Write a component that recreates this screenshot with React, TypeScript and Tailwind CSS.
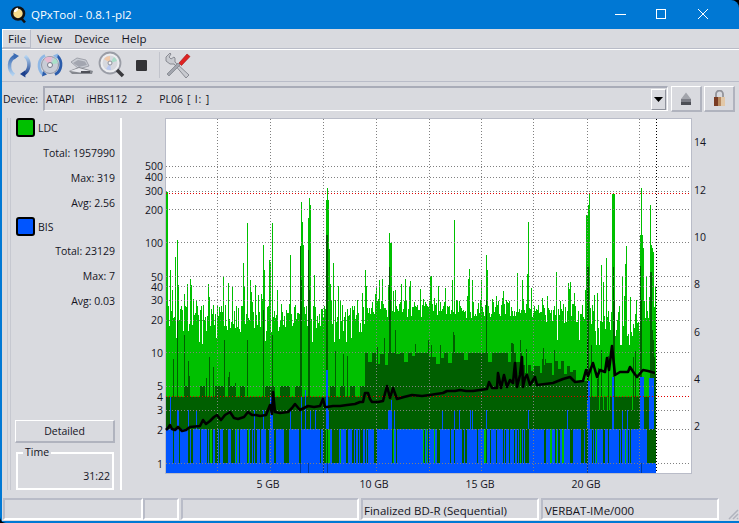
import React from 'react'

const FONT = "[font-family:'Open_Sans',sans-serif]"

// seeded so the graph looks the same on every run
function makeRand(seed: number) {
    let s = seed
    return () => {
        s |= 0
        s = (s + 0x6d2b79f5) | 0
        let t = Math.imul(s ^ (s >>> 15), 1 | s)
        t = (t + Math.imul(t ^ (t >>> 7), 61 | t)) ^ t
        return ((t ^ (t >>> 14)) >>> 0) / 4294967296
    }
}

const SPIKES: [number, number][] = [
    [166, 192], [167, 192], [170, 270], [172, 290], [175, 257], [177, 240], [178, 285], [190, 279], [191, 285], [208, 284], [223, 277], [228, 283],
    [232, 287], [243, 263], [244, 286], [247, 223], [250, 280], [255, 285], [258, 295], [263, 245], [264, 270], [269, 260], [270, 262], [272, 223],
    [277, 290], [290, 255], [300, 267], [301, 202], [302, 222], [303, 245], [308, 218], [309, 198], [310, 205], [314, 275], [326, 200], [327, 188],
    [328, 200], [329, 249], [330, 284], [333, 263], [365, 270], [379, 280], [382, 279], [389, 233], [390, 243], [391, 243], [401, 284], [430, 277],
    [454, 220], [469, 269], [481, 280], [486, 255], [487, 270], [527, 274], [528, 222], [556, 272], [570, 282], [586, 215], [587, 215], [588, 205],
    [589, 194], [601, 265], [603, 282], [606, 258], [612, 194], [613, 194], [614, 194], [622, 277], [625, 264], [626, 246], [640, 235], [641, 188],
    [642, 235], [643, 248], [646, 277], [650, 205], [651, 245], [652, 248], [653, 252], [655, 287],
]

const DARK_SPIKES: [number, number][] = [
    [177, 320], [184, 335], [224, 340], [247, 340], [263, 310], [272, 335], [300, 246], [301, 280], [308, 250], [309, 290], [326, 235], [327, 235],
    [389, 267], [390, 300], [395, 330], [428, 340], [454, 335], [486, 300], [520, 340], [587, 267], [588, 267], [613, 267], [614, 300], [640, 266],
    [641, 300], [650, 272], [651, 272], [652, 330], [653, 340],
]

const BLUE_PEAKS: [number, number][] = [
    [170, 397], [177, 410], [178, 410], [188, 410], [196, 410], [254, 410], [263, 410], [270, 397], [271, 397], [272, 397], [290, 410], [301, 397],
    [305, 390], [310, 410], [315, 410], [326, 370], [327, 370], [328, 410], [388, 410], [389, 410], [390, 410], [391, 400], [394, 410], [442, 410],
    [454, 410], [459, 410], [470, 410], [472, 410], [486, 410], [528, 410], [567, 410], [587, 381], [588, 381], [589, 381], [612, 377], [613, 377],
    [622, 410], [627, 410], [640, 377], [641, 377], [642, 377], [643, 377], [649, 378], [650, 378], [651, 378], [652, 378], [653, 378],
]

const LINE =
    '166,430 168,428 170,425 172,429 175,430 178,427 182,431 186,430 190,427 200,426 203,420 206,424 210,421 214,417 217,415 221,420 225,415 230,412 234,418 238,419 244,417 248,412 252,415 256,415 260,416 266,415 270,405 272,414 273,392 275,412 280,413 288,412 292,408 295,404 300,410 304,408 308,406 314,407 320,406 323,399 325,407 327,407 333,406 340,406 347,405 355,404 360,402 363,402 365,393 368,393 370,399 372,402 378,402 383,401 387,386 390,398 393,388 397,399 404,397 412,395 422,396 430,395 436,394 443,393 447,391 450,391 455,391 460,390 466,391 473,391 480,390 487,389 489,382 492,388 497,388 498,373 501,388 504,375 507,387 510,380 513,383 515,363 517,387 520,375 522,357 523,387 525,378 527,375 530,385 535,377 537,385 545,384 553,383 558,381 563,379 570,377 575,382 583,381 586,370 588,376 593,363 597,377 600,370 605,372 607,358 609,370 612,346 615,375 620,372 628,372 630,367 634,373 637,377 643,370 648,371 655,373'

const buildChart = () => {
    const rand = makeRand(7341)
    const spike = new Map(SPIKES)
    const darkSpike = new Map(DARK_SPIKES)
    const bluePeak = new Map(BLUE_PEAKS)
    let bright = ''
    let dark = ''
    let blue = ''
    let bandBright = ''
    let band = 0
    let block = 353
    let low = 397
    for (let x = 166; x <= 655; x++) {
        const px = x + 0.5
        const lift = rand() < 0.28 ? rand() * 28 : 0
        let top: number
        if (x < 365) top = rand() < 0.06 ? 345 - rand() * 8 : 305 + rand() * 28 - lift
        else if (x < 545) top = 300 + rand() * 18 - lift
        else if (x < 590) top = rand() < 0.06 ? 340 : 303 + rand() * 20 - lift
        else top = rand() < 0.1 ? 345 : 305 + rand() * 32 - lift
        if (spike.has(x)) top = spike.get(x) as number

        let dTop: number
        if (x < 365) {
            if (x % 5 === 0) low = rand() < 0.35 ? 386 : 397
            dTop = low
            if (rand() < 0.06) dTop = 345 + rand() * 40
        } else if (x < 522) {
            if (x % 4 === 0) block = rand() < 0.65 ? 353 : 353 + rand() * 12
            dTop = rand() < 0.06 ? 330 + rand() * 20 : block
        } else if (x < 587) {
            if (x % 3 === 0) block = 360 + rand() * 16
            dTop = x > 575 ? 381 : block
            if (rand() < 0.08) dTop = 340 + rand() * 20
        } else {
            dTop = 397
            const r = rand()
            if (r < 0.14) dTop = 345 + rand() * 40
            else if (r < 0.22) dTop = 410
        }
        if (darkSpike.has(x)) dTop = darkSpike.get(x) as number

        bright += `M${px} ${top}V473`
        dark += `M${px} ${dTop}V473`

        // band between 2 and 1 on the log axis, short runs of blue with green lines between
        if (rand() > 0.25) {
            const r = rand()
            band = r < 0.66 ? 0 : r < 0.72 ? 1 : 2
        }
        if (band === 0) blue += `M${px} 429V463`
        if (band === 1) bandBright += `M${px} 429V463`
        const peak = bluePeak.get(x)
        if (peak) blue += `M${px} ${peak}V429`
    }
    return { bright, dark, blue, bandBright }
}

const chart = buildChart()

const HLINES = [166, 177, 191, 209, 242, 276, 286, 300, 320, 352, 386, 410, 429, 463]
const VLINES = [217, 270, 323, 376, 429, 481, 533, 587, 639]
const LEFT_LABELS: [string, number][] = [
    ['500', 166], ['400', 177], ['300', 191], ['200', 210], ['100', 243], ['50', 277], ['40', 287], ['30', 300], ['20', 320], ['10', 353], ['5', 386], ['4', 397], ['3', 410], ['2', 430], ['1', 464],
]
const RIGHT_LABELS: [string, number][] = [['14', 142], ['12', 190], ['10', 237], ['8', 284], ['6', 332], ['4', 379], ['2', 426]]
const BOTTOM_LABELS: [string, number][] = [['5 GB', 268], ['10 GB', 374], ['15 GB', 480], ['20 GB', 586]]

const Chart = () => (
    <svg viewBox="122 112 617 386" className="block w-[617px] h-[386px] shrink-0">
        <rect x="165" y="118" width="527" height="356" fill="#b9bcc8" />
        <rect x="166" y="119" width="525" height="354" fill="#ffffff" />
        <g shapeRendering="crispEdges" fill="none" strokeWidth="1">
            <path d={chart.bright} stroke="#00c000" />
            <path d={chart.dark} stroke="#005f00" />
            <path d={chart.bandBright} stroke="#00c000" />
            <path d={chart.blue} stroke="#0055ff" />
            <rect x="166" y="463" width="490" height="10" fill="#0055ff" stroke="none" />
            <path d="M300.5 463V473M308.5 463V473M323.5 463V473M327.5 463V473M587.5 463V473M641.5 463V473" stroke="#003a9c" />
            <path d="M587.5 340V400" stroke="#002800" />
            {HLINES.map((y) => (
                <path key={y} d={`M166 ${y + 0.5}H691`} stroke="#808080" strokeDasharray="1 2" />
            ))}
            {VLINES.map((x) => (
                <path key={x} d={`M${x + 0.5} 119V473`} stroke="#808080" strokeDasharray="1 2" />
            ))}
            <path d="M166 193.5H691M166 396.5H691" stroke="#e00000" strokeDasharray="1 2" />
            <path d="M656.5 119V473" stroke="#000000" strokeDasharray="1 2" />
        </g>
        <polyline points={LINE} fill="none" stroke="#000000" strokeWidth="2.6" strokeLinejoin="round" />
        <g className={`${FONT} text-[10.5px]`} fill="#14141e">
            {LEFT_LABELS.map(([t, y]) => (
                <text key={t} x="163" y={y + 4} textAnchor="end">{t}</text>
            ))}
            {RIGHT_LABELS.map(([t, y]) => (
                <text key={t} x="694" y={y + 4}>{t}</text>
            ))}
            {BOTTOM_LABELS.map(([t, x]) => (
                <text key={t} x={x} y="488" textAnchor="middle">{t}</text>
            ))}
        </g>
    </svg>
)

const AppIcon = () => (
    <svg width="18" height="20" viewBox="0 0 18 20" className="ml-[10px] mr-[3px]">
        <circle cx="8" cy="8.500" r="6" fill="#f7dc8c" stroke="#111111" strokeWidth="2.600" />
        <path d="M5 7a3 3 0 0 1 3-3" stroke="#ffffff" strokeWidth="2.400" fill="none" />
        <path d="M11 13l4 4.500" stroke="#111111" strokeWidth="2.600" />
    </svg>
)

const RefreshIcon = () => (
    <svg width="26" height="26" viewBox="0 0 26 26">
        <defs>
            <linearGradient id="arcL" x1="0" y1="0" x2="0" y2="1">
                <stop offset="0" stopColor="#3c6cb4" />
                <stop offset="1" stopColor="#b4d4f2" />
            </linearGradient>
            <linearGradient id="arcR" x1="0" y1="0" x2="0" y2="1">
                <stop offset="0" stopColor="#b4d4f2" />
                <stop offset="1" stopColor="#1c3f8c" />
            </linearGradient>
        </defs>
        <path d="M10 4C2 7 1.500 18 8 23" stroke="url(#arcL)" strokeWidth="3.500" fill="none" />
        <path d="M7.500 1L13 4l-5 3.500z" fill="#3c6cb4" />
        <path d="M17 22.500C24 19 25 9 19 4" stroke="url(#arcR)" strokeWidth="3.500" fill="none" />
        <path d="M19.500 25.500L14 22l5-3.500z" fill="#1c3f8c" />
    </svg>
)

const DiscIcon = () => (
    <svg width="26" height="26" viewBox="0 0 26 26">
        <circle cx="13" cy="13" r="8.500" fill="#c8ccd6" stroke="#8d93a3" />
        <path d="M13 13L7 7a8.500 8.500 0 0 1 8-2z" fill="#e9b8d0" />
        <path d="M13 13L21 11a8.500 8.500 0 0 0-3-5z" fill="#a9e0c8" />
        <circle cx="13" cy="13" r="2.500" fill="#f2f3f6" stroke="#777c8a" />
        <path d="M8 3.500C1 7 0 17 6 22.500" stroke="#8db7e6" strokeWidth="2.800" fill="none" />
        <path d="M18 22.500C25 19 26 9 20 3.500" stroke="#2a5cab" strokeWidth="2.800" fill="none" />
        <path d="M21 1.500L20 7l-4-3.500z" fill="#8db7e6" />
        <path d="M5 24.500L6 19l4 3.500z" fill="#2a5cab" />
    </svg>
)

const DriveIcon = () => (
    <svg width="26" height="26" viewBox="0 0 26 26">
        <path d="M3 10L9 6l9 2 3 6-10 3z" fill="#c9ccd3" stroke="#8a8d96" strokeWidth="0.700" />
        <path d="M5 11l5-3 7 1.500 2 3.500-8 2z" fill="#a3a6b0" />
        <path d="M1 19l10-4 14 4-1 3H4z" fill="#85888f" />
        <path d="M2 19l9-3 11 3-10 1.500z" fill="#e6e7ec" />
        <rect x="13" y="19" width="9" height="2" fill="#4e5058" />
    </svg>
)

const ScanIcon = () => (
    <svg width="28" height="28" viewBox="0 0 28 28">
        <circle cx="12" cy="12" r="10.500" fill="#ecedf0" stroke="#9a9da6" strokeWidth="1.800" />
        <circle cx="12" cy="12" r="7.500" fill="#d6d8de" />
        <path d="M12 12L6 8a7.500 7.500 0 0 1 6-3z" fill="#f0c8a8" />
        <path d="M12 12L19 10a7.500 7.500 0 0 0-3-4z" fill="#a8dcc8" />
        <path d="M12 12L8 18a7.500 7.500 0 0 0 5 1z" fill="#b8c8f0" />
        <circle cx="12" cy="12" r="2" fill="#f6f6f8" stroke="#8f929b" />
        <path d="M19 19l6 6" stroke="#3a3a3e" strokeWidth="3.500" />
    </svg>
)

const ToolsIcon = () => (
    <svg width="28" height="28" viewBox="0 0 28 28">
        <path d="M2 6L6 2l1 1-2 3 2 2 3-2 1 1 0 4 14 13-3 3L10 13H6L2 10z" fill="#c8cad0" stroke="#767982" strokeWidth="0.800" />
        <path d="M3 23L14 12l2 2L5 25z" fill="#a2a5ae" stroke="#6f727b" strokeWidth="0.600" />
        <path d="M15 12l8-9 3 2.500-8.500 9z" fill="#e02222" stroke="#9c1212" strokeWidth="0.600" />
    </svg>
)

const EjectIcon = () => (
    <svg width="12" height="13" viewBox="0 0 12 13">
        <path d="M6 0.500L11 7H1z" fill="#a3a5ac" />
        <rect x="1" y="7" width="10" height="3" fill="#7c7e86" />
        <rect x="1" y="10" width="10" height="3" fill="#4d4f56" />
    </svg>
)

const LockIcon = () => (
    <svg width="13" height="16" viewBox="0 0 13 16">
        <path d="M3 7V4a3.500 3.500 0 0 1 7 0v3" stroke="#93949b" strokeWidth="1.800" fill="none" />
        <rect x="1" y="7" width="11" height="9" fill="#b88a60" />
        <rect x="1" y="7" width="4" height="9" fill="#7a3c24" />
        <rect x="8" y="7" width="4" height="9" fill="#e2c8a8" />
    </svg>
)

const Stat = ({ label, value }: { label: string; value: string }) => (
    <p className="h-[24.6px] flex items-center justify-end whitespace-pre">
        {label}: {value}
    </p>
)

const Legend = ({ color, label }: { color: string; label: string }) => (
    <div className="flex items-center gap-[3px] h-[19px]">
        <span className={`block w-[19px] h-[19px] rounded-[3px] border-2 border-black ${color}`} />
        <span className="pt-[2px]">{label}</span>
    </div>
)

const StatusCell = ({ className, children }: { className: string; children?: React.ReactNode }) => (
    <div className={`h-full border-t-2 border-l-2 border-[#b9bcc8] border-b-2 border-b-white border-r-2 border-r-white flex items-center pl-[1px] pt-[3px] ${className}`}>
        {children}
    </div>
)

const App = () => {
    return (
        <div className={`w-[739px] h-[523px] bg-black overflow-hidden text-[10.5px] text-[#14141e] ${FONT}`}>
            <div className="w-full h-full bg-[#0078d4] rounded-tr-[8px] rounded-bl-[6px] pl-[2px] pb-[2px] flex flex-col">
                <div className="h-[29px] -ml-[2px] flex items-center text-white text-[11.5px] shrink-0">
                    <AppIcon />
                    <span>QPxTool - 0.8.1-pl2</span>
                    <div className="ml-auto flex items-center">
                        <svg width="108" height="29" viewBox="0 0 108 29" className="mr-[16px]">
                            <path d="M0 14.500H11" stroke="#fff" />
                            <rect x="41.500" y="9.500" width="9" height="9" stroke="#fff" fill="none" />
                            <path d="M83 9l10 10M93 9L83 19" stroke="#fff" />
                        </svg>
                    </div>
                </div>
                <div className="flex-1 bg-[#d9dadf] flex flex-col min-h-0">
                    <div className="h-[19px] flex items-center text-[11.5px] shrink-0">
                        <span className="h-full w-[29px] flex items-center pl-[5px] border-t border-l border-white border-r border-r-[#b9bcc8] border-b border-b-[#b9bcc8]">File</span>
                        <span className="ml-[6px]">View</span>
                        <span className="ml-[12px]">Device</span>
                        <span className="ml-[12px]">Help</span>
                    </div>
                    <div className="h-[34px] shrink-0 border-t border-[#b9bcc8] border-b flex items-center pl-[4px] relative">
                        <div className="absolute left-0 right-0 top-0 h-px bg-white" />
                        <RefreshIcon />
                        <div className="ml-[5px]"><DiscIcon /></div>
                        <div className="ml-[5px]"><DriveIcon /></div>
                        <div className="ml-[4px]"><ScanIcon /></div>
                        <span className="block ml-[10px] w-[11px] h-[11px] bg-[#333336] rounded-[1px]" />
                        <span className="block ml-[12px] w-px h-[26px] bg-white border-l border-[#c2c4cc]" />
                        <div className="ml-[4px]"><ToolsIcon /></div>
                    </div>
                    <div className="h-[30px] shrink-0 flex items-center pr-[2px] pt-[3px]">
                        <span className="w-[41px] pl-[1px] pt-[2px]">Device:</span>
                        <div className="w-[625px] h-[25px] flex items-center border-t-2 border-l-2 border-[#a9acb8] border-b border-b-white border-r border-r-white pl-[1px] whitespace-pre">
                            <span className="pt-[1px]">ATAPI</span>
                            <span className="pt-[1px] ml-[12px]">iHBS112</span>
                            <span className="pt-[1px] ml-[9px]">2</span>
                            <span className="pt-[1px] ml-[17px]">PL06</span>
                            <span className="pt-[1px] ml-[4px] tracking-[0.8px]">[ I: ]</span>
                            <div className="ml-auto mr-px w-[15px] h-[21px] border border-t-white border-l-white border-r-[#8f929c] border-b-[#8f929c] flex items-center justify-center">
                                <svg width="9" height="5" viewBox="0 0 9 5"><path d="M0 0h9L4.500 5z" fill="#000" /></svg>
                            </div>
                        </div>
                        <div className="ml-[3px] w-[31px] h-[26px] border border-t-white border-l-white border-r-2 border-b-2 border-r-[#b0b3be] border-b-[#b0b3be] flex items-center justify-center"><EjectIcon /></div>
                        <div className="ml-[2px] w-[31px] h-[26px] border border-t-white border-l-white border-r-2 border-b-2 border-r-[#b0b3be] border-b-[#b0b3be] flex items-center justify-center"><LockIcon /></div>
                    </div>
                    <div className="flex-1 flex min-h-0">
                        <div className="w-[115px] ml-[5px] mt-[6px] mb-[7px] flex shrink-0 h-[372px]">
                            <div className="w-[5px] border-l border-[#c6c8d0] border-r" />
                            <div className="flex-1 pl-[5px] pr-[5px] border-r-2 border-white flex flex-col">
                                <Legend color="bg-[#00c000]" label="LDC" />
                                <div className="mt-[5px]">
                                    <Stat label="Total" value="1957990" />
                                    <Stat label="Max" value="319" />
                                    <Stat label="Avg" value="2.56" />
                                </div>
                                <div className="mt-[1.200px]">
                                    <Legend color="bg-[#0055ff]" label="BIS" />
                                </div>
                                <div className="mt-[4px]">
                                    <Stat label="Total" value="23129" />
                                    <Stat label="Max" value="7" />
                                    <Stat label="Avg" value="0.03" />
                                </div>
                                <button className="mt-auto -ml-px w-[100px] h-[23px] pt-[2px] border border-t-white border-l-white border-r-2 border-b-2 border-r-[#b0b3be] border-b-[#b0b3be] text-center text-[10.5px]">Detailed</button>
                                <div className="mt-[9px] w-[98px] h-[38px] border-2 border-white flex items-end justify-end pr-[2px] pb-[3px] relative">
                                    <span className="absolute left-[5px] -top-[9px] px-[2px] bg-[#d9dadf]">Time</span>
                                    <span>31:22</span>
                                </div>
                            </div>
                        </div>
                        <Chart />
                    </div>
                    <div className="h-[22px] shrink-0 flex mb-[1px] ml-[1px] text-[11.5px]">
                        <StatusCell className="w-[140px]" />
                        <StatusCell className="w-[36px]" />
                        <StatusCell className="w-[178px] ml-[2px]" />
                        <StatusCell className="w-[178px] ml-[2px]">Finalized BD-R (Sequential)</StatusCell>
                        <StatusCell className="w-[178px] ml-[2px] pl-[2px]">VERBAT-IMe/000</StatusCell>
                        <div className="flex-1 flex items-end justify-end">
                            <svg width="13" height="13" viewBox="0 0 13 13"><path d="M12 3L3 12M12 7L7 12M12 11L11 12" stroke="#b0b3be" strokeWidth="1.500" /></svg>
                        </div>
                    </div>
                </div>
            </div>
        </div>
    )
}

export default App
